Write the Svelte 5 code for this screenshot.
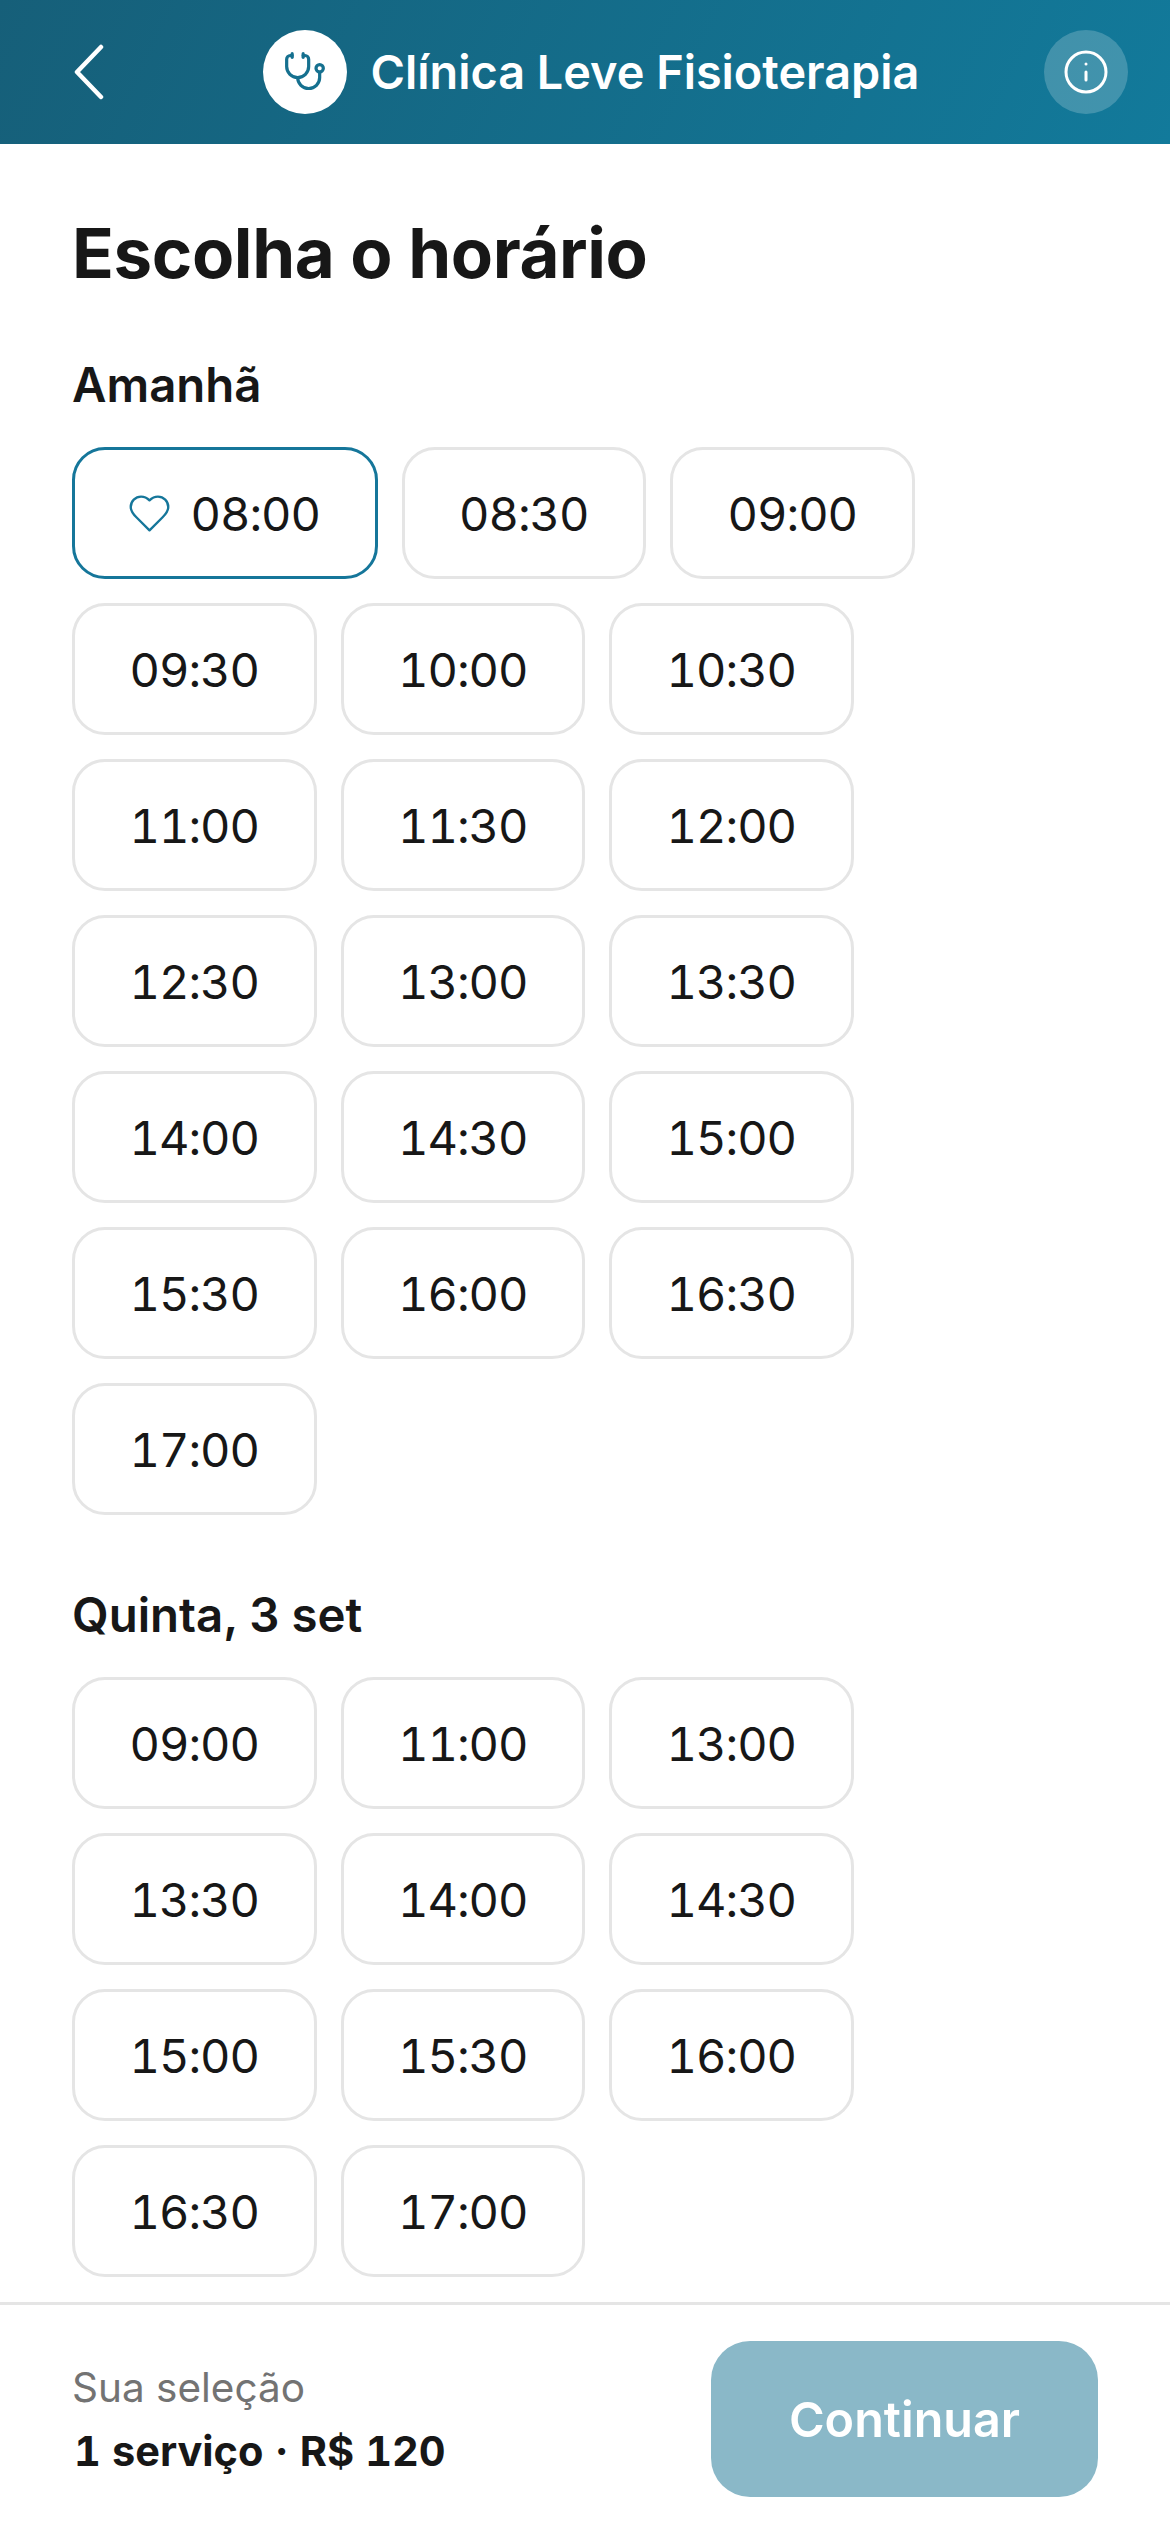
<script>
	const days = [
		{
			label: 'Amanhã',
			slots: ['08:00', '08:30', '09:00', '09:30', '10:00', '10:30', '11:00', '11:30', '12:00', '12:30', '13:00', '13:30', '14:00', '14:30', '15:00', '15:30', '16:00', '16:30', '17:00']
		},
		{
			label: 'Quinta, 3 set',
			slots: ['09:00', '11:00', '13:00', '13:30', '14:00', '14:30', '15:00', '15:30', '16:00', '16:30', '17:00']
		}
	];

	let selected = 'Amanhã-08:00';
</script>

<div class="page">
	<header class="top">
		<button class="back" aria-label="Voltar">
			<svg width="32" height="56" viewBox="0 0 32 56" fill="none" stroke="currentColor" stroke-width="4.5" stroke-linecap="round" stroke-linejoin="round">
				<path d="M29 3 5 28l24 25" />
			</svg>
		</button>
		<div class="brand">
			<span class="logo">
				<svg width="44" height="44" viewBox="0 0 24 24" fill="none" stroke="currentColor" stroke-width="1.75" stroke-linecap="round" stroke-linejoin="round">
					<path d="M11 2v2" />
					<path d="M5 2v2" />
					<path d="M5 3H4a2 2 0 0 0-2 2v4a6 6 0 0 0 12 0V5a2 2 0 0 0-2-2h-1" />
					<path d="M8 15a6 6 0 0 0 12 0v-3" />
					<circle cx="20" cy="10" r="2" />
				</svg>
			</span>
			<span class="name">Clínica Leve Fisioterapia</span>
		</div>
		<button class="info" aria-label="Informações">
			<svg width="48" height="48" viewBox="0 0 24 24" fill="none" stroke="currentColor" stroke-width="1.5" stroke-linecap="round" stroke-linejoin="round">
				<circle cx="12" cy="12" r="10" />
				<path d="M12 16v-4" />
				<path d="M12 8h.01" />
			</svg>
		</button>
	</header>

	<main class="content">
		<h1>Escolha o horário</h1>
		{#each days as day}
			<section class="day">
				<h2>{day.label}</h2>
				<div class="slots">
					{#each day.slots as slot}
						<button class="slot" class:active={selected === day.label + '-' + slot}>
							{#if selected === day.label + '-' + slot}
								<svg class="heart" width="45" height="45" viewBox="0 0 24 24" fill="none" stroke="currentColor" stroke-width="1.25" stroke-linecap="round" stroke-linejoin="round">
									<path d="M19 14c1.49-1.46 3-3.21 3-5.5A5.5 5.5 0 0 0 16.5 3c-1.76 0-3 .5-4.5 2-1.5-1.5-2.74-2-4.5-2A5.5 5.5 0 0 0 2 8.5c0 2.3 1.5 4.05 3 5.5l7 7Z" />
								</svg>
							{/if}
							{slot}
						</button>
					{/each}
				</div>
			</section>
		{/each}
	</main>

	<footer class="bar">
		<div class="summary">
			<div class="hint">Sua seleção</div>
			<div class="total">1 serviço · R$ 120</div>
		</div>
		<button class="next">Continuar</button>
	</footer>
</div>

<style>
	:global(body) {
		margin: 0;
		background: #fff;
	}
	.page {
		height: 2532px;
		display: flex;
		flex-direction: column;
		font-family: Inter, "Liberation Sans", sans-serif;
		color: #171717;
		overflow: hidden;
	}
	button {
		font-family: inherit;
		cursor: pointer;
	}
	.top {
		height: 144px;
		flex-shrink: 0;
		display: flex;
		align-items: center;
		justify-content: space-between;
		padding: 0 42px 0 72px;
		box-sizing: border-box;
		background: linear-gradient(115deg, #165f79, #127a9b);
		color: #fff;
	}
	.back {
		width: 66px;
		padding: 0;
		border: 0;
		background: none;
		color: #fff;
		display: flex;
	}
	.brand {
		display: flex;
		align-items: center;
		gap: 24px;
	}
	.logo {
		width: 84px;
		height: 84px;
		border-radius: 50%;
		background: #fff;
		color: #15708f;
		display: flex;
		align-items: center;
		justify-content: center;
	}
	.name {
		font-size: 46.8px;
		font-weight: 600;
	}
	.info {
		width: 84px;
		height: 84px;
		padding: 0;
		border: 0;
		border-radius: 50%;
		background: rgba(255, 255, 255, 0.2);
		color: #fff;
		display: flex;
		align-items: center;
		justify-content: center;
	}
	.content {
		flex: 1;
		min-height: 0;
		overflow: hidden;
		padding: 0 72px;
	}
	h1 {
		margin: 64px 0 0;
		font-size: 69px;
		line-height: 90px;
		font-weight: 700;
		letter-spacing: -0.4px;
	}
	.day {
		margin-top: 57px;
	}
	.day + .day {
		margin-top: 70px;
	}
	h2 {
		margin: 0 0 32px;
		font-size: 47.4px;
		line-height: 60px;
		font-weight: 600;
	}
	.slots {
		display: flex;
		flex-wrap: wrap;
		gap: 24px;
	}
	.slot {
		height: 132px;
		padding: 0 54.5px;
		box-sizing: border-box;
		border: 3px solid #e5e5e5;
		border-radius: 33px;
		background: #fff;
		color: #171717;
		font-size: 47px;
		letter-spacing: -1px;
		font-variant-numeric: tabular-nums;
		display: flex;
		align-items: center;
		gap: 19px;
	}
	.slot.active {
		border-color: #15769a;
	}
	.heart {
		margin-left: -3px;
		color: #15769a;
	}
	.bar {
		height: 230px;
		flex-shrink: 0;
		box-sizing: border-box;
		border-top: 3px solid #e5e5e5;
		padding: 36px 72px 36px;
		display: flex;
		justify-content: space-between;
		align-items: flex-start;
		background: #fff;
	}
	.summary {
		padding-top: 20px;
	}
	.hint {
		font-size: 40.5px;
		line-height: 54px;
		color: #737373;
	}
	.total {
		margin: 8px 0 0 2px;
		font-size: 41.5px;
		line-height: 56px;
		font-weight: 700;
		font-variant-numeric: tabular-nums;
	}
	.next {
		width: 387px;
		height: 156px;
		border: 0;
		border-radius: 39px;
		background: #8ab8c8;
		color: #fff;
		font-size: 48.5px;
		font-weight: 600;
	}
</style>
